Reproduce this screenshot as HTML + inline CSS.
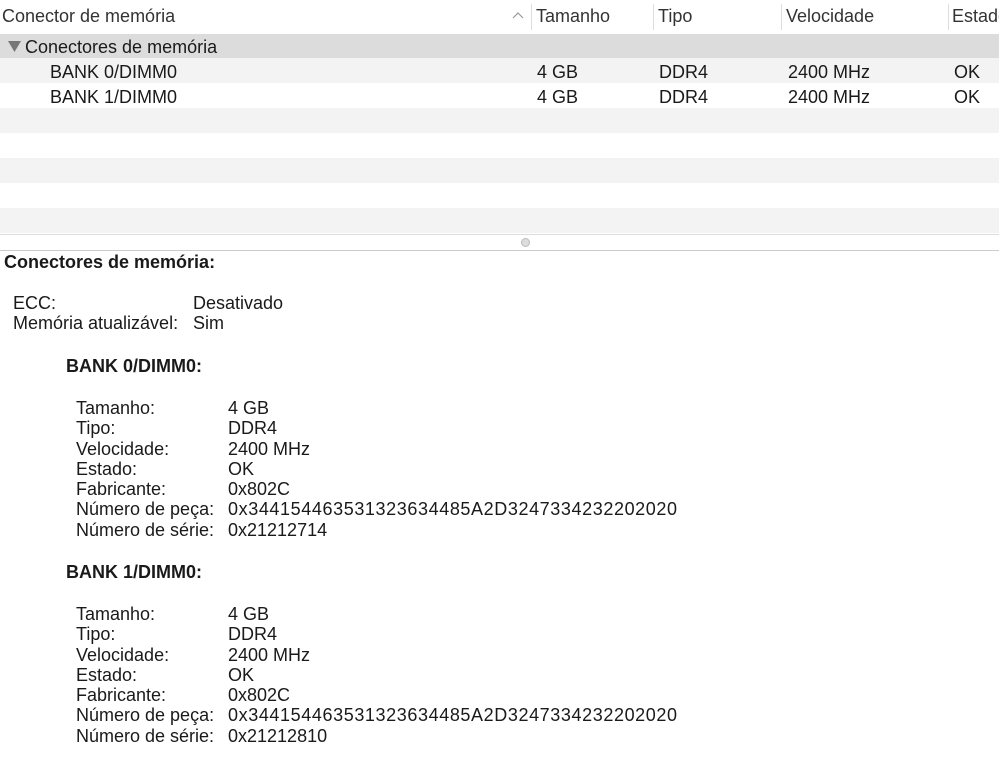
<!DOCTYPE html>
<html><head><meta charset="utf-8"><style>
body{margin:0;width:999px;height:770px;background:#fff;font-family:"Liberation Sans",Arial,sans-serif;font-size:18px;color:#1a1a1a;position:relative;overflow:hidden}
.a{position:absolute;white-space:nowrap;line-height:20px}
.r{position:absolute;left:0;width:999px;height:25px}
.sep{position:absolute;top:4px;width:1px;height:26px;background:#ddd}
b{font-weight:bold}
</style></head><body>
<div class="r" style="top:0;height:34px;background:#fff"></div>
<div class="a" style="left:2px;top:6px;color:#333">Conector de memória</div>
<svg style="position:absolute;left:512px;top:11px" width="12" height="8"><path d="M1 7 L6 2 L11 7" fill="none" stroke="#999" stroke-width="1.2"/></svg>
<div class="sep" style="left:531px"></div>
<div class="a" style="left:536px;top:6px;color:#333">Tamanho</div>
<div class="sep" style="left:653px"></div>
<div class="a" style="left:658px;top:6px;color:#333">Tipo</div>
<div class="sep" style="left:781px"></div>
<div class="a" style="left:786px;top:6px;color:#333">Velocidade</div>
<div class="sep" style="left:948px"></div>
<div class="a" style="left:952px;top:6px;color:#333">Estado</div>
<div class="r" style="top:34px;height:24px;background:#dcdcdc"></div>
<svg style="position:absolute;left:8px;top:41px" width="13" height="11"><path d="M0 0 L13 0 L6.5 11 Z" fill="#777"/></svg>
<div class="a" style="left:25px;top:37px">Conectores de memória</div>
<div class="r" style="top:58px;background:#f3f3f3"></div>
<div class="r" style="top:108px;background:#f3f3f3"></div>
<div class="r" style="top:158px;background:#f3f3f3"></div>
<div class="r" style="top:208px;background:#f3f3f3"></div>
<div class="a" style="left:50px;top:62px">BANK 0/DIMM0</div>
<div class="a" style="left:537px;top:62px">4 GB</div>
<div class="a" style="left:659px;top:62px">DDR4</div>
<div class="a" style="left:788px;top:62px">2400 MHz</div>
<div class="a" style="left:954px;top:62px">OK</div>
<div class="a" style="left:50px;top:87px">BANK 1/DIMM0</div>
<div class="a" style="left:537px;top:87px">4 GB</div>
<div class="a" style="left:659px;top:87px">DDR4</div>
<div class="a" style="left:788px;top:87px">2400 MHz</div>
<div class="a" style="left:954px;top:87px">OK</div>
<div class="r" style="top:234px;height:15px;background:#fff;border-top:1px solid #ddd;border-bottom:1px solid #ccc"></div>
<div style="position:absolute;left:521px;top:238px;width:7px;height:7px;border-radius:50%;background:#ddd;border:1px solid #bbb"></div>
<div class="a" style="left:4px;top:252px"><b>Conectores de memória:</b></div>
<div class="a" style="left:13px;top:293px">ECC:</div><div class="a" style="left:193px;top:293px">Desativado</div>
<div class="a" style="left:13px;top:313px">Memória atualizável:</div><div class="a" style="left:193px;top:313px">Sim</div>
<div class="a" style="left:66px;top:356px"><b>BANK 0/DIMM0:</b></div>
<div class="a" style="left:76px;top:398px;line-height:20.3px">Tamanho:<br>Tipo:<br>Velocidade:<br>Estado:<br>Fabricante:<br>Número de peça:<br>Número de série:</div>
<div class="a" style="left:228px;top:398px;line-height:20.3px">4 GB<br>DDR4<br>2400 MHz<br>OK<br>0x802C<br><span style="letter-spacing:0.6px">0x344154463531323634485A2D3247334232202020</span><br>0x21212714</div>
<div class="a" style="left:66px;top:562px"><b>BANK 1/DIMM0:</b></div>
<div class="a" style="left:76px;top:604px;line-height:20.3px">Tamanho:<br>Tipo:<br>Velocidade:<br>Estado:<br>Fabricante:<br>Número de peça:<br>Número de série:</div>
<div class="a" style="left:228px;top:604px;line-height:20.3px">4 GB<br>DDR4<br>2400 MHz<br>OK<br>0x802C<br><span style="letter-spacing:0.6px">0x344154463531323634485A2D3247334232202020</span><br>0x21212810</div>
</body></html>
